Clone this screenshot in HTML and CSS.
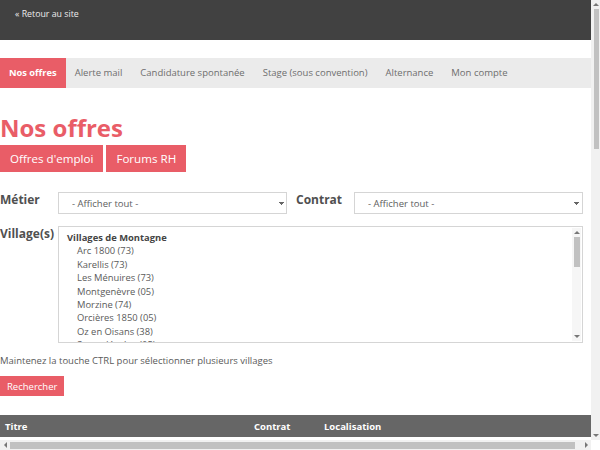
FILE: index.html
```html
<!DOCTYPE html>
<html lang="fr">
<head>
<meta charset="utf-8">
<title>Nos offres</title>
<link rel="stylesheet" href="styles.css">
</head>
<body>
<div class="screen">
  <div class="content">
    <header class="topbar">
      <a class="back" href="#">« Retour au site</a>
    </header>
    <nav class="tabs">
      <a class="tab active" href="#">Nos offres</a>
      <a class="tab" href="#">Alerte mail</a>
      <a class="tab" href="#">Candidature spontanée</a>
      <a class="tab" href="#">Stage (sous convention)</a>
      <a class="tab" href="#">Alternance</a>
      <a class="tab" href="#">Mon compte</a>
    </nav>
    <main class="main">
      <h1 class="title">Nos offres</h1>
      <div class="subtabs">
        <a class="btn big" href="#">Offres d'emploi</a>
        <a class="btn big" href="#">Forums RH</a>
      </div>
      <form class="filters">
        <div class="row">
          <label class="lbl">Métier</label>
          <select class="sel"><option>- Afficher tout -</option></select>
          <label class="lbl lbl-contrat">Contrat</label>
          <select class="sel"><option>- Afficher tout -</option></select>
        </div>
        <div class="row row-villages">
          <label class="lbl">Village(s)</label>
          <div class="listbox" role="listbox" aria-multiselectable="true">
            <div class="list">
              <div class="group">Villages de Montagne</div>
              <div class="opt">Arc 1800 (73)</div>
              <div class="opt">Karellis (73)</div>
              <div class="opt">Les Ménuires (73)</div>
              <div class="opt">Montgenèvre (05)</div>
              <div class="opt">Morzine (74)</div>
              <div class="opt">Orcières 1850 (05)</div>
              <div class="opt">Oz en Oisans (38)</div>
              <div class="opt">Superdévoluy (05)</div>
              <div class="opt">Val Cenis (73)</div>
            </div>
            <div class="sb sb-v small">
              <span class="ar ar-up"></span>
              <span class="thumb thumb-list"></span>
              <span class="fill"></span>
              <span class="ar ar-down"></span>
            </div>
          </div>
        </div>
        <p class="hint">Maintenez la touche CTRL pour sélectionner plusieurs villages</p>
        <button class="btn search" type="button">Rechercher</button>
      </form>
      <table class="offers">
        <thead>
          <tr><th class="c-titre">Titre</th><th class="c-contrat">Contrat</th><th class="c-loc">Localisation</th></tr>
        </thead>
      </table>
    </main>
  </div>
  <div class="sb sb-v page-v">
    <span class="ar ar-up"></span>
    <span class="thumb thumb-page"></span>
    <span class="fill"></span>
    <span class="ar ar-down"></span>
  </div>
  <div class="sb sb-h">
    <span class="ar ar-left"></span>
    <span class="thumb thumb-h"></span>
    <span class="ar ar-right"></span>
  </div>
  <div class="corner"></div>
</div>
</body>
</html>
```
FILE: styles.css
```css
body {
  margin: 0;
  font-family: "Open Sans", "Liberation Sans", sans-serif;
  color: #666;
  background: #fff;
}
.screen {
  width: 600px;
  height: 450px;
  display: grid;
  grid-template-columns: 591px 9px;
  grid-template-rows: 440px 10px;
  overflow: hidden;
}
.content {
  overflow: hidden;
}
.topbar {
  height: 40px;
  background: #414141;
  padding-left: 15px;
  box-sizing: border-box;
}
.back {
  display: inline-block;
  color: #ececec;
  font-size: 8.8px;
  line-height: 26px;
  text-decoration: none;
}
.tabs {
  margin-top: 18px;
  height: 30px;
  background: #ebebeb;
  display: flex;
}
.tab {
  padding: 0 9px;
  line-height: 30px;
  font-size: 9.5px;
  color: #6e6e6e;
  text-decoration: none;
}
.tab.active {
  background: #e95d67;
  color: #fff;
  font-weight: 700;
  font-size: 9.3px;
}
.main {
  width: 583px;
}
.title {
  margin: 24px 0 0;
  font-size: 24px;
  line-height: 32px;
  font-weight: 700;
  color: #e95d67;
}
.subtabs {
  display: flex;
  gap: 3px;
  margin-top: 1px;
}
.btn {
  background: #e95d67;
  color: #fff;
  border: 0;
  font-family: inherit;
  text-decoration: none;
}
.btn.big {
  font-size: 11.6px;
  line-height: 27px;
  padding: 0 10px;
}
.filters {
  margin-top: 20px;
}
.row {
  display: flex;
  align-items: flex-start;
}
.lbl {
  width: 58px;
  flex: none;
  font-size: 12px;
  font-weight: 700;
  color: #505050;
  line-height: 16px;
}
.lbl-contrat {
  margin-left: 9px;
}
.sel {
  width: 229px;
  height: 22px;
  flex: none;
  margin: 0;
  border: 1px solid #d5d5d5;
  border-radius: 0;
  background-color: #fff;
  background-image: linear-gradient(45deg, transparent 50%, #666 50%), linear-gradient(135deg, #666 50%, transparent 50%);
  background-position: 219px 9px, 222px 9px;
  background-size: 3px 3px, 3px 3px;
  background-repeat: no-repeat;
  appearance: none;
  -webkit-appearance: none;
  padding: 0 0 0 13px;
  font-family: inherit;
  font-size: 9.5px;
  color: #5e5e5e;
}
.row-villages {
  margin-top: 12px;
}
.listbox {
  width: 525px;
  height: 117px;
  box-sizing: border-box;
  border: 1px solid #d5d5d5;
  display: flex;
  overflow: hidden;
}
.list {
  flex: 1;
  padding: 4px 0 0 8px;
  font-size: 9.4px;
  line-height: 13.4px;
  color: #5a5a5a;
  overflow: hidden;
}
.group {
  font-weight: 700;
  color: #444;
}
.opt {
  padding-left: 10px;
}
.sb {
  display: flex;
  background: #f1f1f1;
  align-items: center;
}
.sb-v {
  flex-direction: column;
  width: 9px;
}
.sb-v.small {
  background: #f6f6f6;
  margin: 1px 1px 1px 0;
}
.sb-h {
  flex-direction: row;
  padding: 0 4px;
}
.fill {
  flex: 1;
}
.ar {
  width: 0;
  height: 0;
  flex: none;
  border: 3px solid transparent;
}
.ar-up {
  border-bottom: 3px solid #777;
  border-top: 0;
  margin: 3px 0 3px;
}
.ar-down {
  border-top: 3px solid #777;
  border-bottom: 0;
  margin: 3px 0;
}
.ar-left {
  border-right: 3px solid #777;
  border-left: 0;
}
.ar-right {
  border-left: 3px solid #777;
  border-right: 0;
  margin-left: 10px;
}
.thumb {
  background: #c1c1c1;
  flex: none;
}
.thumb-list {
  width: 6px;
  height: 30px;
}
.thumb-page {
  width: 5px;
  height: 140px;
  margin-left: 2px;
}
.thumb-h {
  height: 7px;
  width: 565px;
  margin-left: 3px;
}
.corner {
  background: #fff;
}
.hint {
  margin: 11px 0 0;
  font-size: 9.5px;
  line-height: 14px;
  color: #5a5a5a;
}
.search {
  margin-top: 8px;
  font-size: 9.5px;
  height: 20px;
  padding: 0 7px;
}
.offers {
  margin-top: 19px;
  width: 591px;
  border-collapse: collapse;
}
.offers th {
  background: #666;
  color: #fff;
  font-size: 9.5px;
  font-weight: 700;
  text-align: left;
  height: 22px;
  padding: 0 5px;
}
.c-titre { width: 239px; }
.c-contrat { width: 60px; }
```
